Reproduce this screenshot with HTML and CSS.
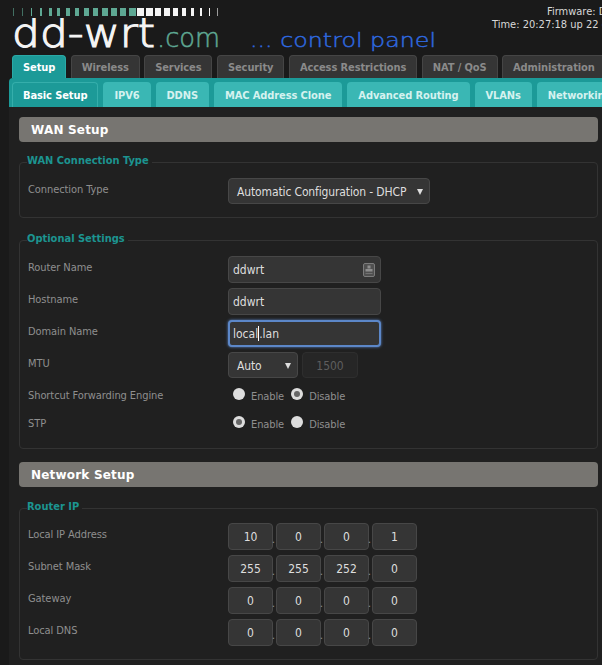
FILE: index.html
```html
<!DOCTYPE html>
<html lang="en">
<head>
    <meta charset="UTF-8">
    <meta name="viewport" content="width=device-width, initial-scale=1.0">
    <title>DD-WRT Basic Setup</title>
    <link rel="stylesheet" href="styles.css">
</head>
<body>
    <div class="page">
        <header class="header">
            <div class="dots">
                <i class="t1 dim"></i><i class="t1 dim"></i><i class="t1"></i><i class="t2"></i><i class="t3"></i><i class="t3"></i><i class="t4"></i><i class="t4"></i><i class="t5"></i><i class="t5"></i><i class="t6"></i><i class="t6"></i><i class="t6"></i><i class="t7"></i>
                <b class="t7"></b><b class="t7"></b><b class="t6"></b><b class="t6"></b><b class="t5"></b><b class="t4"></b><b class="t3"></b><b class="t2"></b><b class="t1"></b><b class="t1 dim"></b>
            </div>
            <svg class="logo" width="440" height="40" viewBox="0 0 440 40">
                <text class="logo-main" x="12" y="29" textLength="143" lengthAdjust="spacingAndGlyphs">dd-wrt</text>
                <text class="logo-com" x="157" y="29" textLength="63" lengthAdjust="spacingAndGlyphs">.com</text>
                <text class="logo-panel" x="250" y="29" textLength="186" lengthAdjust="spacingAndGlyphs">... control panel</text>
            </svg>
            <div class="info">
                <div class="info-firmware">Firmware: DD-WRT</div>
                <div>Time: 20:27:18 up 22 days</div>
            </div>
        </header>

        <nav class="tabs">
            <a class="tab active">Setup</a>
            <a class="tab">Wireless</a>
            <a class="tab">Services</a>
            <a class="tab">Security</a>
            <a class="tab">Access Restrictions</a>
            <a class="tab">NAT / QoS</a>
            <a class="tab">Administration</a>
        </nav>
        <nav class="subtabs">
            <a class="subtab active">Basic Setup</a>
            <a class="subtab">IPV6</a>
            <a class="subtab">DDNS</a>
            <a class="subtab">MAC Address Clone</a>
            <a class="subtab">Advanced Routing</a>
            <a class="subtab">VLANs</a>
            <a class="subtab">Networking</a>
        </nav>

        <main class="main">
            <h2 class="bar">WAN Setup</h2>

            <fieldset class="group group-wan">
                <legend>WAN Connection Type</legend>
                <div class="row">
                    <label>Connection Type</label>
                    <div class="select select-wide">Automatic Configuration - DHCP<span class="arrow"></span></div>
                </div>
            </fieldset>

            <fieldset class="group group-opt">
                <legend>Optional Settings</legend>
                <div class="row">
                    <label>Router Name</label>
                    <div class="input">ddwrt
                        <svg class="key" width="12" height="14" viewBox="0 0 12 14">
                            <rect x="0.5" y="0.5" width="11" height="13" rx="1.5" fill="#505050" stroke="#7c7c7c"/>
                            <rect x="4.5" y="2.5" width="3" height="3" fill="#8e8e8e"/>
                            <rect x="2.5" y="6" width="7" height="2.5" fill="#8e8e8e"/>
                            <rect x="2.5" y="10" width="7" height="1" fill="#727272"/>
                        </svg>
                    </div>
                </div>
                <div class="row">
                    <label>Hostname</label>
                    <div class="input">ddwrt</div>
                </div>
                <div class="row">
                    <label>Domain Name</label>
                    <div class="input focus">local<span class="caret"></span>.lan</div>
                </div>
                <div class="row">
                    <label>MTU</label>
                    <div class="select select-mtu">Auto<span class="arrow"></span></div>
                    <div class="mtu-value">1500</div>
                </div>
                <div class="row row-radio">
                    <label>Shortcut Forwarding Engine</label>
                    <div class="radios">
                        <span class="radio"></span><span class="radio-text">Enable</span>
                        <span class="radio on"></span><span class="radio-text">Disable</span>
                    </div>
                </div>
                <div class="row row-radio">
                    <label>STP</label>
                    <div class="radios">
                        <span class="radio on"></span><span class="radio-text">Enable</span>
                        <span class="radio"></span><span class="radio-text">Disable</span>
                    </div>
                </div>
            </fieldset>

            <h2 class="bar">Network Setup</h2>

            <fieldset class="group group-ip">
                <legend>Router IP</legend>
                <div class="row">
                    <label>Local IP Address</label>
                    <div class="ip"><span class="num">10</span><span class="num">0</span><span class="num">0</span><span class="num">1</span></div>
                </div>
                <div class="row">
                    <label>Subnet Mask</label>
                    <div class="ip"><span class="num">255</span><span class="num">255</span><span class="num">252</span><span class="num">0</span></div>
                </div>
                <div class="row">
                    <label>Gateway</label>
                    <div class="ip"><span class="num">0</span><span class="num">0</span><span class="num">0</span><span class="num">0</span></div>
                </div>
                <div class="row">
                    <label>Local DNS</label>
                    <div class="ip"><span class="num">0</span><span class="num">0</span><span class="num">0</span><span class="num">0</span></div>
                </div>
            </fieldset>
        </main>
    </div>
</body>
</html>
```
FILE: styles.css
```css
html, body {
    margin: 0;
    height: 665px;
    overflow: hidden;
    background: #1a1a1a;
}

body {
    font-family: "DejaVu Sans Condensed", "DejaVu Sans", sans-serif;
    font-stretch: condensed;
    font-size: 11px;
    color: #ccc;
}

.page {
    width: 602px;
    height: 665px;
    overflow: hidden;
}

/* header */
.header {
    position: relative;
    height: 55px;
}

.dots {
    display: grid;
    grid-template-columns: repeat(24, 8.9px);
    padding: 8px 0 0 13px;
}

.dots i, .dots b {
    display: block;
    height: 8px;
}

.dots i { background: #5ea893; }
.dots b { background: #f4f4f4; }
.t1 { width: 1px; }
.t2 { width: 2px; }
.t3 { width: 3px; }
.t4 { width: 4px; }
.t5 { width: 5px; }
.t6 { width: 6px; }
.t7 { width: 7px; }
.dots .dim { opacity: .6; }

.logo {
    position: absolute;
    left: 0;
    top: 18px;
}

.logo text {
    font-family: "DejaVu Sans", sans-serif;
    font-stretch: normal;
    font-weight: 200;
}

.logo-main {
    font-size: 40px;
    fill: #f4f4f4;
    stroke: #f4f4f4;
    stroke-width: 1.2px;
}

.logo-com {
    font-size: 26px;
    fill: #5ea893;
    stroke: #5ea893;
    stroke-width: .5px;
}

.logo-panel {
    font-size: 20px;
    fill: #2f6ae0;
    stroke: #2f6ae0;
    stroke-width: .4px;
}

.info {
    position: absolute;
    left: 492px;
    top: 5px;
    line-height: 13px;
    color: #d8d8d8;
    white-space: nowrap;
}

.info-firmware {
    padding-left: 55px;
}

/* tabs */
.tabs {
    display: flex;
    gap: 4.5px;
    padding-left: 12px;
    height: 23px;
    white-space: nowrap;
}

.tab {
    padding: 0 10px;
    height: 23px;
    line-height: 24px;
    font-weight: bold;
    letter-spacing: -.1px;
    color: #8a8a8a;
    background: #353535;
    border: 1px solid #454545;
    border-bottom: 0;
    border-radius: 4px 4px 0 0;
    box-sizing: border-box;
    flex: none;
}

.tab.active {
    color: #fff;
    background: #1c9a98;
    border-color: #2aa9a6;
}

.subtabs {
    display: flex;
    gap: 5px;
    margin-left: 9px;
    padding: 4px 0 0 3px;
    height: 25px;
    background: #1c9a98;
    border-radius: 4px 0 0 0;
    white-space: nowrap;
}

.subtab {
    padding: 0 11px;
    height: 25px;
    line-height: 27px;
    font-weight: bold;
    letter-spacing: -.1px;
    color: #d5f2ef;
    background: #3ab7b4;
    border-radius: 4px 4px 0 0;
    flex: none;
}

.subtab.active {
    padding: 0 10px;
    color: #fff;
    background: #1c9a98;
    border: 1px solid #35aeab;
    border-bottom: 0;
    line-height: 26px;
    box-sizing: border-box;
}

/* content */
.main {
    margin-left: 9px;
    width: 620px;
    box-sizing: border-box;
    height: 560px;
    padding: 10px 0 0 10px;
    background: #202020;
}

.bar {
    width: 579px;
    height: 25px;
    margin: 0;
    padding-left: 12px;
    box-sizing: border-box;
    line-height: 26px;
    font-family: "DejaVu Sans", sans-serif;
    font-stretch: normal;
    font-size: 12px;
    font-weight: bold;
    letter-spacing: .2px;
    color: #fff;
    background: #777571;
    border-radius: 4px;
}

.group {
    width: 579px;
    box-sizing: border-box;
    margin: 0;
    padding: 6px 0 0 8px;
    border: 1px solid #333;
    border-radius: 4px;
}

.group legend {
    padding: 0 3px 3px 0;
    margin-left: -1px;
    line-height: 16px;
    font-weight: bold;
    color: #1c9490;
}

.group-wan {
    margin-top: 11px;
    height: 65px;
}

.group-opt {
    margin: 13px 0;
    height: 218px;
}

.group-ip {
    margin-top: 12px;
    height: 161px;
    padding-top: 5px;
}

.row {
    display: flex;
    height: 32px;
    align-items: flex-start;
}

.row label {
    width: 200px;
    flex: none;
    margin-top: 4px;
    line-height: 16px;
    letter-spacing: -.08px;
    color: #8f8f8f;
}

.row-radio {
    height: 28px;
}

/* form controls */
.input, .select, .num, .mtu-value {
    box-sizing: border-box;
    background: #353535;
    border: 1px solid #474747;
    border-radius: 4px;
    color: #dedede;
    font-size: 12px;
}

.input {
    position: relative;
    width: 153px;
    height: 27px;
    line-height: 27px;
    padding-left: 4px;
}

.input.focus {
    border: 2px solid #5c87c8;
    box-shadow: 0 0 3px #5c87c8;
    line-height: 25px;
    padding-left: 3px;
}

.caret {
    display: inline-block;
    width: 1px;
    height: 15px;
    background: #fff;
    vertical-align: -3px;
}

.key {
    position: absolute;
    right: 5px;
    top: 6px;
}

.select {
    position: relative;
    height: 26px;
    line-height: 26px;
    padding-left: 8px;
    letter-spacing: -.13px;
}

.select-wide { width: 202px; }
.select-mtu { width: 70px; }

.arrow {
    position: absolute;
    right: 6px;
    top: 10px;
    width: 0;
    height: 0;
    border-left: 3px solid transparent;
    border-right: 3px solid transparent;
    border-top: 6px solid #ddd;
}

.mtu-value {
    width: 56px;
    height: 26px;
    margin-left: 4px;
    line-height: 26px;
    text-align: center;
    color: #5e5e5e;
    background: #262626;
    border-color: #2e2e2e;
}

.radios {
    display: flex;
    align-items: flex-start;
    padding: 4px 0 0 5px;
    letter-spacing: -.1px;
    color: #8f8f8f;
}

.radio {
    position: relative;
    width: 12px;
    height: 12px;
    border-radius: 50%;
    background: #ddd;
}

.radio.on::after {
    content: "";
    position: absolute;
    left: 3px;
    top: 3px;
    width: 6px;
    height: 6px;
    border-radius: 50%;
    background: #666;
}

.radio-text {
    margin: 2px 7px 0 6px;
    line-height: 14px;
}

.ip {
    display: flex;
    gap: 3px;
}

.num {
    width: 45px;
    height: 27px;
    line-height: 27px;
    text-align: center;
    position: relative;
}

.num + .num::before {
    content: ".";
    position: absolute;
    left: -5px;
    top: 2px;
    color: #999;
    font-size: 10px;
}
```
